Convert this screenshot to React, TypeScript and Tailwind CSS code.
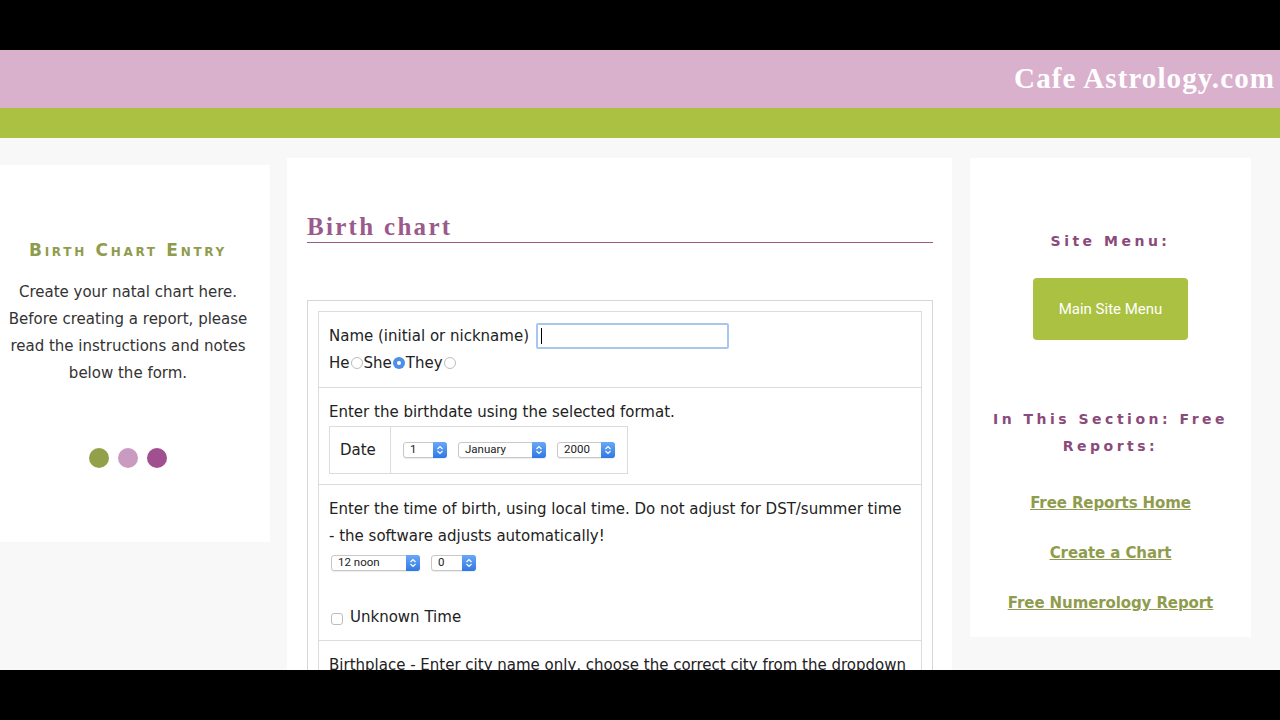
import React from 'react';

const bodyFont = { fontFamily: '"DejaVu Sans", Verdana, sans-serif' };

const Select = ({ label, width }: { label: string; width: string }) => (
  <div
    className={`${width} h-[16px] flex items-center justify-between bg-white border border-[#c8c8c8] rounded-[3px] shadow-[0_1px_1px_rgba(0,0,0,0.08)]`}
    style={{ fontFamily: 'Roboto, "Liberation Sans", sans-serif' }}
  >
    <span className="pl-[6px] text-[11.5px] leading-none text-[#222]">{label}</span>
    <span className="w-[14px] h-[16px] -my-px -mr-px rounded-r-[3px] bg-gradient-to-b from-[#6aa8f7] to-[#2f78e4] flex items-center justify-center">
      <svg width="8" height="10" viewBox="0 0 8 10" fill="none" stroke="white" strokeWidth="1.2">
        <path d="M1.5 4 L4 1.5 L6.5 4" />
        <path d="M1.5 6 L4 8.5 L6.5 6" />
      </svg>
    </span>
  </div>
);

const Radio = ({ checked }: { checked?: boolean }) =>
  checked ? (
    <span className="inline-flex w-[12px] h-[12px] rounded-full bg-[#4d8ee8] items-center justify-center mx-px">
      <span className="w-[4px] h-[4px] rounded-full bg-white" />
    </span>
  ) : (
    <span className="inline-block w-[12px] h-[12px] rounded-full border border-[#bdbdbd] bg-white mx-px" />
  );

export default function App() {
  return (
    <div className="w-[1280px] h-[720px] flex flex-col overflow-hidden bg-black">
      {/* top black strip */}
      <div className="h-[50px] bg-black" />

      {/* pink header */}
      <div className="h-[58px] bg-[#d9b1cd] flex items-center justify-end pr-[5px]">
        <span
          className="text-white text-[29px] font-bold tracking-[1.1px] pb-[1px]"
          style={{ fontFamily: '"Liberation Serif", Georgia, serif' }}
        >
          Cafe Astrology.com
        </span>
      </div>

      {/* green band */}
      <div className="h-[30px] bg-[#abc142]" />

      {/* content */}
      <div className="h-[532px] bg-[#f8f8f8] overflow-hidden pt-[20px] flex" style={bodyFont}>
        {/* left panel */}
        <div className="w-[270px] h-[377px] mt-[7px] bg-white flex flex-col items-center pt-[75px] pr-[14px] shrink-0">
          <h3 className="text-[#8f9c4e] font-bold text-[17px] tracking-[2.7px] leading-[20px] [font-variant:small-caps]">
            Birth Chart Entry
          </h3>
          <p className="mt-[19px] text-center text-[15px] leading-[27px] text-[#333]">
            Create your natal chart here.
            <br />
            Before creating a report, please
            <br />
            read the instructions and notes
            <br />
            below the form.
          </p>
          <div className="flex gap-[9px] mt-[61px]">
            <span className="w-[20px] h-[20px] rounded-full bg-[#92a04a]" />
            <span className="w-[20px] h-[20px] rounded-full bg-[#c99bc0]" />
            <span className="w-[20px] h-[20px] rounded-full bg-[#a04f8f]" />
          </div>
        </div>

        {/* main panel */}
        <div className="w-[665px] ml-[17px] shrink-0 bg-white pl-[20px] pr-[19px] pt-[54px]">
          <h1
            className="text-[#9b5a8b] text-[25px] font-bold tracking-[2.3px] leading-[30px] border-b border-[#9b5a8b]"
            style={{ fontFamily: '"Liberation Serif", Georgia, serif' }}
          >
            Birth chart
          </h1>

          <div className="mt-[57px] border border-[#d6d6d6] p-[10px] pb-0 text-[15px] text-[#222]">
            <div className="border border-[#dcdcdc] border-b-0">
              {/* name row */}
              <div className="px-[10px] pt-[11px] pb-[12px] border-b border-[#dcdcdc]">
                <div className="flex items-center gap-[7px]">
                  <span>Name (initial or nickname)</span>
                  <div className="w-[193px] h-[26px] border-2 border-[#a8c6f0] rounded-[2px] flex items-center pl-[3px]">
                    <span className="w-px h-[16px] bg-black" />
                  </div>
                </div>
                <div className="flex items-center mt-[2px] leading-[24px]">
                  He
                  <Radio />
                  She
                  <Radio checked />
                  They
                  <Radio />
                </div>
              </div>

              {/* birthdate row */}
              <div className="px-[10px] pt-[13px] pb-[10px] border-b border-[#dcdcdc]">
                <div className="leading-[22px]">Enter the birthdate using the selected format.</div>
                <div className="mt-[3px] inline-flex border border-[#dcdcdc] h-[48px]">
                  <div className="w-[61px] border-r border-[#dcdcdc] flex items-center pl-[10px]">Date</div>
                  <div className="flex items-center gap-[11px] pl-[12px] pr-[12px]">
                    <Select label="1" width="w-[44px]" />
                    <Select label="January" width="w-[88px]" />
                    <Select label="2000" width="w-[58px]" />
                  </div>
                </div>
              </div>

              {/* time row */}
              <div className="px-[10px] pt-[11px] pb-[12px] border-b border-[#dcdcdc]">
                <div className="leading-[27px]">
                  Enter the time of birth, using local time. Do not adjust for DST/summer time
                  <br />- the software adjusts automatically!
                </div>
                <div className="flex items-center gap-[11px] mt-[5px] ml-[2px]">
                  <Select label="12 noon" width="w-[89px]" />
                  <Select label="0" width="w-[45px]" />
                </div>
                <div className="flex items-center gap-[7px] mt-[35px] ml-[2px] leading-[22px]">
                  <span className="w-[12px] h-[12px] rounded-[3px] border border-[#bdbdbd] bg-white mt-[3px]" />
                  <span>Unknown Time</span>
                </div>
              </div>

              {/* birthplace row */}
              <div className="px-[10px] pt-[13px] leading-[22px] whitespace-nowrap">
                Birthplace - Enter city name only, choose the correct city from the dropdown
              </div>
            </div>
          </div>
        </div>

        {/* right panel */}
        <div className="w-[281px] h-[479px] ml-[18px] shrink-0 bg-white flex flex-col items-center pt-[73px]">
          <h4 className="text-[#8b4a7c] font-bold text-[14px] tracking-[3.5px] leading-[20px]">
            Site Menu:
          </h4>
          <button
            className="mt-[27px] w-[155px] h-[62px] rounded-[4px] bg-[#abc142] text-white text-[15px]"
            style={{ fontFamily: 'Roboto, "Liberation Sans", sans-serif' }}
          >
            Main Site Menu
          </button>
          <h4 className="mt-[66px] text-center text-[#8b4a7c] font-bold text-[14px] tracking-[3.5px] leading-[27px] px-[8px]">
            In This Section: Free Reports:
          </h4>
          <div className="mt-[32px] flex flex-col items-center gap-[28px] text-[15px] leading-[22px] font-bold text-[#8f9c4e] underline tracking-[-0.1px]">
            <a>Free Reports Home</a>
            <a>Create a Chart</a>
            <a>Free Numerology Report</a>
          </div>
        </div>
      </div>

      {/* bottom black strip */}
      <div className="h-[50px] bg-black" />
    </div>
  );
}
